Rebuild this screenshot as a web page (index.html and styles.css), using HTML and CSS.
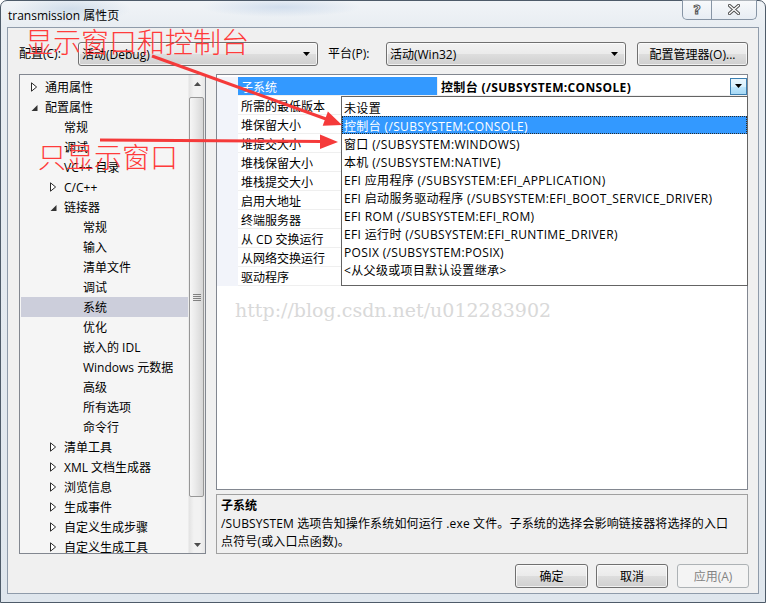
FILE: index.html
```html
<!DOCTYPE html>
<html lang="zh-CN">
<head>
<meta charset="utf-8">
<title>transmission 属性页</title>
<link rel="stylesheet" href="styles.css">
</head>
<body>
<div class="window">
  <div class="titlebar">
    <span class="title">transmission 属性页</span>
    <div class="caption">
      <span class="cap cap-help">?</span>
      <span class="cap cap-close"><svg width="12" height="11" viewBox="0 0 12 11"><path d="M1.5 1.5 L10.5 9.5 M10.5 1.5 L1.5 9.5" stroke="#4f4f4f" stroke-width="3.2" stroke-linecap="round"/><path d="M1.5 1.5 L10.5 9.5 M10.5 1.5 L1.5 9.5" stroke="#fff" stroke-width="1.3" stroke-linecap="round"/></svg></span>
    </div>
  </div>
  <div class="client">
    <div class="config-row">
      <span class="lbl lbl-config">配置(C):</span>
      <div class="combo"><span>活动(Debug)</span><svg class="combo-arrow" width="8" height="5" viewBox="0 0 8 5"><path d="M0 0 H7 L3.5 4 Z" fill="#000"/></svg></div>
      <span class="lbl lbl-platform">平台(P):</span>
      <div class="combo"><span>活动(Win32)</span><svg class="combo-arrow" width="8" height="5" viewBox="0 0 8 5"><path d="M0 0 H7 L3.5 4 Z" fill="#000"/></svg></div>
      <button class="btn btn-manager">配置管理器(O)...</button>
    </div>

    <div class="main">
      <div class="tree">
        <div class="tree-list">
          <div class="node l0"><span class="tw"><svg width="7" height="10" viewBox="0 0 7 10"><path d="M0.5 0.8 L5.6 5 L0.5 9.2 Z" fill="#fff" stroke="#2b2b2b" stroke-width="1"/></svg></span>通用属性</div>
          <div class="node l0"><span class="tw"><svg width="7" height="10" viewBox="0 0 7 10"><path d="M6.5 3 V9 H0.5 Z" fill="#333"/></svg></span>配置属性</div>
          <div class="node l1"><span class="tw"></span>常规</div>
          <div class="node l1"><span class="tw"></span>调试</div>
          <div class="node l1"><span class="tw"></span>VC++ 目录</div>
          <div class="node l1"><span class="tw"><svg width="7" height="10" viewBox="0 0 7 10"><path d="M0.5 0.8 L5.6 5 L0.5 9.2 Z" fill="#fff" stroke="#2b2b2b" stroke-width="1"/></svg></span>C/C++</div>
          <div class="node l1"><span class="tw"><svg width="7" height="10" viewBox="0 0 7 10"><path d="M6.5 3 V9 H0.5 Z" fill="#333"/></svg></span>链接器</div>
          <div class="node l2"><span class="tw"></span>常规</div>
          <div class="node l2"><span class="tw"></span>输入</div>
          <div class="node l2"><span class="tw"></span>清单文件</div>
          <div class="node l2"><span class="tw"></span>调试</div>
          <div class="node l2 selected"><span class="tw"></span>系统</div>
          <div class="node l2"><span class="tw"></span>优化</div>
          <div class="node l2"><span class="tw"></span>嵌入的 IDL</div>
          <div class="node l2"><span class="tw"></span>Windows 元数据</div>
          <div class="node l2"><span class="tw"></span>高级</div>
          <div class="node l2"><span class="tw"></span>所有选项</div>
          <div class="node l2"><span class="tw"></span>命令行</div>
          <div class="node l1"><span class="tw"><svg width="7" height="10" viewBox="0 0 7 10"><path d="M0.5 0.8 L5.6 5 L0.5 9.2 Z" fill="#fff" stroke="#2b2b2b" stroke-width="1"/></svg></span>清单工具</div>
          <div class="node l1"><span class="tw"><svg width="7" height="10" viewBox="0 0 7 10"><path d="M0.5 0.8 L5.6 5 L0.5 9.2 Z" fill="#fff" stroke="#2b2b2b" stroke-width="1"/></svg></span>XML 文档生成器</div>
          <div class="node l1"><span class="tw"><svg width="7" height="10" viewBox="0 0 7 10"><path d="M0.5 0.8 L5.6 5 L0.5 9.2 Z" fill="#fff" stroke="#2b2b2b" stroke-width="1"/></svg></span>浏览信息</div>
          <div class="node l1"><span class="tw"><svg width="7" height="10" viewBox="0 0 7 10"><path d="M0.5 0.8 L5.6 5 L0.5 9.2 Z" fill="#fff" stroke="#2b2b2b" stroke-width="1"/></svg></span>生成事件</div>
          <div class="node l1"><span class="tw"><svg width="7" height="10" viewBox="0 0 7 10"><path d="M0.5 0.8 L5.6 5 L0.5 9.2 Z" fill="#fff" stroke="#2b2b2b" stroke-width="1"/></svg></span>自定义生成步骤</div>
          <div class="node l1"><span class="tw"><svg width="7" height="10" viewBox="0 0 7 10"><path d="M0.5 0.8 L5.6 5 L0.5 9.2 Z" fill="#fff" stroke="#2b2b2b" stroke-width="1"/></svg></span>自定义生成工具</div>
        </div>
        <div class="vscroll">
          <div class="sb-btn"><svg width="7" height="4" viewBox="0 0 7 4"><path d="M0 4 H7 L3.5 0 Z" fill="#4d4d4d"/></svg></div>
          <div class="sb-thumb"><span class="grip"></span></div>
          <div class="sb-track"></div>
          <div class="sb-btn"><svg width="7" height="4" viewBox="0 0 7 4"><path d="M0 0 H7 L3.5 4 Z" fill="#4d4d4d"/></svg></div>
        </div>
      </div>

      <div class="right">
        <div class="grid">
          <div class="rows">
            <div class="row sel"><span class="gut"></span><span class="name">子系统</span><span class="val"><b>控制台 (/SUBSYSTEM:CONSOLE)</b><span class="ddbtn"><svg width="7" height="4" viewBox="0 0 7 4"><path d="M0 0 H7 L3.5 4 Z" fill="#000"/></svg></span></span></div>
            <div class="row"><span class="gut"></span><span class="name">所需的最低版本</span><span class="val"></span></div>
            <div class="row"><span class="gut"></span><span class="name">堆保留大小</span><span class="val"></span></div>
            <div class="row"><span class="gut"></span><span class="name">堆提交大小</span><span class="val"></span></div>
            <div class="row"><span class="gut"></span><span class="name">堆栈保留大小</span><span class="val"></span></div>
            <div class="row"><span class="gut"></span><span class="name">堆栈提交大小</span><span class="val"></span></div>
            <div class="row"><span class="gut"></span><span class="name">启用大地址</span><span class="val"></span></div>
            <div class="row"><span class="gut"></span><span class="name">终端服务器</span><span class="val"></span></div>
            <div class="row"><span class="gut"></span><span class="name">从 CD 交换运行</span><span class="val"></span></div>
            <div class="row"><span class="gut"></span><span class="name">从网络交换运行</span><span class="val"></span></div>
            <div class="row"><span class="gut"></span><span class="name">驱动程序</span><span class="val"></span></div>
          </div>
          <div class="watermark">http://blog.csdn.net/u012283902</div>
          <div class="dropdown">
            <div class="opt">未设置</div>
            <div class="opt on">控制台 (/SUBSYSTEM:CONSOLE)</div>
            <div class="opt">窗口 (/SUBSYSTEM:WINDOWS)</div>
            <div class="opt">本机 (/SUBSYSTEM:NATIVE)</div>
            <div class="opt">EFI 应用程序 (/SUBSYSTEM:EFI_APPLICATION)</div>
            <div class="opt">EFI 启动服务驱动程序 (/SUBSYSTEM:EFI_BOOT_SERVICE_DRIVER)</div>
            <div class="opt">EFI ROM (/SUBSYSTEM:EFI_ROM)</div>
            <div class="opt">EFI 运行时 (/SUBSYSTEM:EFI_RUNTIME_DRIVER)</div>
            <div class="opt">POSIX (/SUBSYSTEM:POSIX)</div>
            <div class="opt">&lt;从父级或项目默认设置继承&gt;</div>
          </div>
        </div>
        <div class="desc">
          <div class="desc-title">子系统</div>
          <div class="desc-text">/SUBSYSTEM 选项告知操作系统如何运行 .exe 文件。子系统的选择会影响链接器将选择的入口<br>点符号(或入口点函数)。</div>
        </div>
      </div>
    </div>

    <div class="buttons">
      <button class="btn b-ok">确定</button>
      <button class="btn b-cancel">取消</button>
      <button class="btn b-apply" disabled>应用(A)</button>
    </div>
  </div>
</div>

<div class="note note-1">显示窗口和控制台</div>
<div class="note note-2">只显示窗口</div>
<svg class="arrows" width="766" height="603" viewBox="0 0 766 603">
  <line x1="152" y1="56" x2="326" y2="119" stroke="#f53a3a" stroke-width="3"/>
  <path d="M342 125 L322.7 125.8 L327.9 111.6 Z" fill="#f53a3a"/>
  <line x1="100" y1="140" x2="322" y2="141.6" stroke="#f53a3a" stroke-width="3"/>
  <path d="M338 142 L320 134.6 L320 149 Z" fill="#f53a3a"/>
</svg>
</body>
</html>
```

FILE: styles.css
```css
* { box-sizing: border-box; }
html, body { margin: 0; padding: 0; }
body {
  width: 766px;
  height: 603px;
  overflow: hidden;
  position: relative;
  background: #fff;
  font-family: "Open Sans", "Noto Sans CJK SC", sans-serif;
  font-size: 12px;
  color: #000;
}

.window {
  width: 766px;
  height: 603px;
  border: 1px solid #4e5b69;
  border-radius: 7px 7px 0 0;
  background:
    radial-gradient(ellipse 60px 14px at 70px 8px, rgba(120,160,200,0.25), transparent),
    radial-gradient(ellipse 80px 10px at 280px 6px, rgba(120,160,210,0.25), transparent),
    linear-gradient(180deg, #f1f4f7 0, #e8edf2 26px, #dfe6ed 100%);
  display: flex;
  flex-direction: column;
}

.titlebar {
  height: 26px;
  flex: none;
  position: relative;
}
.title {
  display: block;
  margin: 7px 0 0 7px;
  line-height: 16px;
  font-size: 12px;
}
.caption {
  position: absolute;
  right: 8px;
  top: -1px;
  height: 20px;
  display: flex;
  border: 1px solid #8795a5;
  border-top: none;
  border-radius: 0 0 5px 5px;
  background: linear-gradient(180deg, rgba(255,255,255,0.55), rgba(230,236,243,0.7));
}
.cap {
  display: flex;
  align-items: center;
  justify-content: center;
}
.cap-help {
  width: 29px;
  border-right: 1px solid #8795a5;
  font-family: "DejaVu Sans", sans-serif;
  font-weight: bold;
  font-size: 13px;
  color: #fff;
  -webkit-text-stroke: 1px #555;
}
.cap-close { width: 44px; }

.client {
  margin-left: 6px;
  width: 752px;
  height: 567px;
  flex: none;
  border: 1px solid #8f9baa;
  background: #f0f0f0;
  padding: 0 10px 0 11px;
  display: flex;
  flex-direction: column;
}

.config-row {
  margin-top: 14px;
  height: 24px;
  display: flex;
  align-items: center;
}
.lbl { line-height: 24px; }
.lbl-config { width: 59px; }
.lbl-platform { width: 58px; margin-left: 10px; }

.combo {
  width: 240px;
  height: 24px;
  border: 1px solid #707070;
  border-radius: 3px;
  background: linear-gradient(180deg, #f2f2f2 0%, #ebebeb 48%, #dddddd 52%, #cfcfcf 100%);
  box-shadow: inset 0 0 0 1px rgba(255,255,255,0.7);
  display: flex;
  align-items: center;
  padding: 0 6px 0 3px;
  justify-content: space-between;
}
.combo-arrow { display: block; }

.btn {
  font-family: inherit;
  font-size: 12px;
  color: #000;
  height: 24px;
  padding: 0;
  border: 1px solid #707070;
  border-radius: 3px;
  background: linear-gradient(180deg, #f2f2f2 0%, #ebebeb 48%, #dddddd 52%, #cfcfcf 100%);
  box-shadow: inset 0 0 0 1px rgba(255,255,255,0.7);
}
.btn-manager { width: 111px; margin-left: 11px; }

.main {
  margin-top: 8px;
  height: 480px;
  display: flex;
  gap: 10px;
}

/* tree */
.tree {
  width: 187px;
  height: 480px;
  border: 1px solid #828790;
  background: #f5f5f5;
  display: flex;
  overflow: hidden;
}
.tree-list {
  flex: 1;
  padding: 2px 0 0 1px;
  overflow: hidden;
}
.node {
  height: 20px;
  line-height: 20px;
  padding-top: 2px;
  display: flex;
  align-items: center;
  white-space: nowrap;
}
.node.l0 { padding-left: 10px; }
.node.l1 { padding-left: 29px; }
.node.l2 { padding-left: 48px; }
.node.selected { background: #cccedb; }
.tw {
  width: 14px;
  flex: none;
  display: flex;
  align-items: center;
  margin-top: -2px;
}
.tw svg { display: block; }

.vscroll {
  width: 17px;
  flex: none;
  display: flex;
  flex-direction: column;
  background: linear-gradient(90deg, #e3e3e3, #f2f2f2 30%, #f2f2f2 70%, #e6e6e6);
  border-left: 1px solid #ececec;
}
.sb-btn {
  height: 17px;
  display: flex;
  align-items: center;
  justify-content: center;
}
.sb-thumb {
  margin: 5px 1px 0 0;
  height: 400px;
  border: 1px solid #979797;
  border-radius: 2px;
  background: linear-gradient(90deg, #f6f6f6 0%, #e9e9e9 45%, #d6d6d6 100%);
  display: flex;
  align-items: center;
  justify-content: center;
}
.grip {
  width: 8px;
  height: 7px;
  background: repeating-linear-gradient(180deg, #555 0 1px, transparent 1px 2px);
  opacity: 0.7;
}
.sb-track { flex: 1; }

/* right */
.right {
  width: 532px;
  display: flex;
  flex-direction: column;
  gap: 4px;
}
.grid {
  height: 416px;
  border: 1px solid #828790;
  background: #fff;
  position: relative;
  padding-top: 2px;
}
.rows { display: flex; flex-direction: column; }
.row {
  height: 19px;
  display: flex;
}
.gut {
  width: 21px;
  flex: none;
  background: #f2f4fa;
}
.name {
  width: 200px;
  flex: none;
  padding: 2px 0 0 3px;
  line-height: 18px;
  border-right: 1px solid #efefef;
  border-bottom: 1px solid #efefef;
  white-space: nowrap;
  overflow: hidden;
}
.val {
  flex: 1;
  border-bottom: 1px solid #efefef;
  display: flex;
  align-items: center;
  justify-content: space-between;
  padding-left: 3px;
}
.row.sel .name {
  background: #3399ff;
  color: #fff;
}
.val b {
  font-weight: bold;
  letter-spacing: 0.35px;
  padding-top: 3px;
  line-height: 16px;
}
.ddbtn {
  width: 17px;
  height: 17px;
  border: 1px solid #3c7fb1;
  background: linear-gradient(180deg, #eaf6fd, #d9f0fc 50%, #bee6fd 52%, #a7d9f5);
  display: flex;
  align-items: center;
  justify-content: center;
}

.watermark {
  position: absolute;
  left: 18px;
  top: 224px;
  font-family: "DejaVu Serif", serif;
  font-size: 19px;
  color: #d9d9d9;
  white-space: nowrap;
}

.dropdown {
  position: absolute;
  left: 124px;
  top: 21px;
  width: 407px;
  height: 190px;
  border: 1px solid #646464;
  background: #fff;
  padding-top: 1px;
}
.opt {
  height: 18px;
  line-height: 18px;
  padding: 2px 0 0 2px;
  white-space: nowrap;
  letter-spacing: 0.35px;
}
.opt.on {
  background: #3399ff;
  color: #fff;
  outline: 1px dotted #2a2a2a;
  outline-offset: -1px;
}

.desc {
  height: 60px;
  border: 1px solid #a0a0a0;
  background: #f0f0f0;
  padding: 2px 4px 0 4px;
  line-height: 18px;
}
.desc-title { font-weight: bold; }
.desc-text { letter-spacing: 0.15px; }

.buttons {
  margin-top: 10px;
  margin-right: -1px;
  display: flex;
  justify-content: flex-end;
}
.b-ok { width: 73px; }
.b-cancel { width: 72px; margin-left: 8px; }
.b-apply { width: 72px; margin-left: 9px; }
.btn:disabled {
  color: #838383;
  border-color: #adb2b5;
  background: #f4f4f4;
  box-shadow: none;
}

/* annotations drawn on top of the screenshot */
.note {
  position: absolute;
  font-family: "Noto Sans CJK SC", sans-serif;
  font-weight: 300;
  font-size: 28px;
  line-height: 28px;
  color: #ff3b3b;
  white-space: nowrap;
}
.note-1 { left: 25px; top: 27px; }
.note-2 { left: 38px; top: 142px; }
.arrows {
  position: absolute;
  left: 0;
  top: 0;
  pointer-events: none;
}
```
